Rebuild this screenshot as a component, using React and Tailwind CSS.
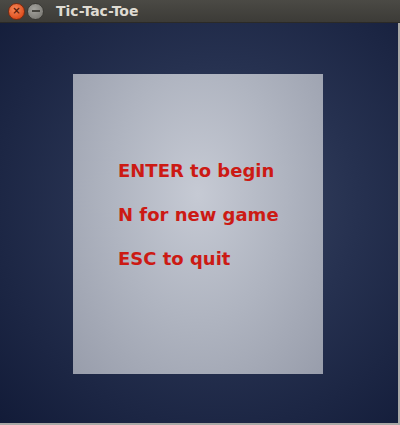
import React from 'react';

const lines = ['ENTER to begin', 'N for new game', 'ESC to quit'];

const App = () => {
  return (
    <div className="w-[400px] h-[425px] flex flex-col bg-[#3c3b37] font-['DejaVu_Sans',sans-serif]">
      {/* title bar */}
      <div className="h-[23px] flex items-center shrink-0 bg-gradient-to-b from-[#4b4a45] to-[#3c3b37] border-b border-[#2b2a27]">
        <div className="ml-[8px] w-[17px] h-[17px] rounded-full bg-[radial-gradient(circle_at_40%_35%,#f58a5c,#e0501f_70%,#b73a14)] border border-[#7a2a10] flex items-center justify-center text-[#5a1a08] text-[10px] leading-none font-bold">
          ×
        </div>
        <div className="ml-[2px] w-[17px] h-[17px] rounded-full bg-[radial-gradient(circle_at_40%_35%,#a5a49f,#807f7a_70%,#6a6964)] border border-[#3a3935] flex items-center justify-center">
          <div className="w-[8px] h-[2px] bg-[#45443f]" />
        </div>
        <span className="ml-[12px] text-[14px] font-bold text-[#dfdbd2]">Tic-Tac-Toe</span>
      </div>

      {/* content */}
      <div className="flex-1 flex pr-[2px] pb-[2px] bg-[#a9a9a6]">
        <div className="flex-1 pt-[51px] pl-[73px] bg-[radial-gradient(ellipse_at_55%_45%,#3a4663_0%,#263150_45%,#121b38_100%)]">
          <div className="w-[250px] h-[300px] pt-[86px] pl-[45px] flex flex-col gap-[22px] bg-[radial-gradient(ellipse_at_50%_40%,#c6cad4_0%,#afb4c0_50%,#989dab_100%)]">
            {lines.map((line) => (
              <div key={line} className="text-[18px] leading-[22px] font-bold text-[#cc1a14]">
                {line}
              </div>
            ))}
          </div>
        </div>
      </div>
    </div>
  );
};

export default App;
